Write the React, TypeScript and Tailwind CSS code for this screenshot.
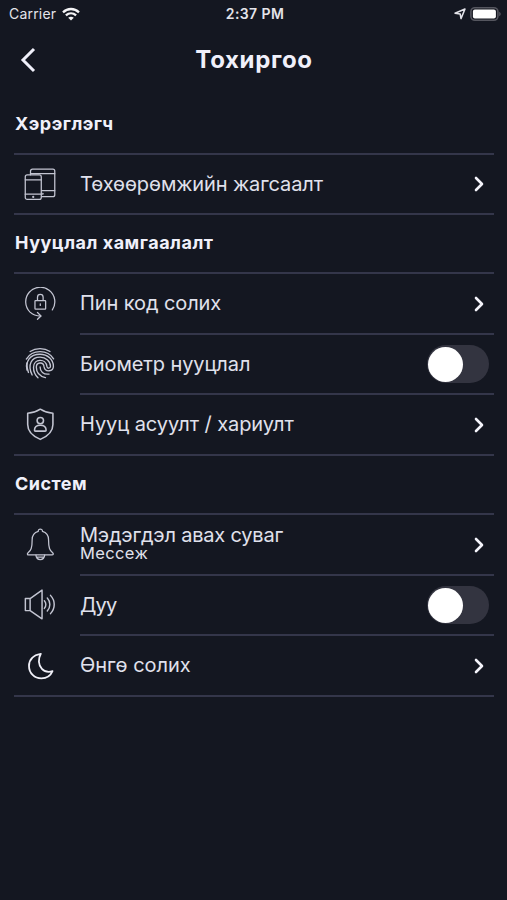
import type { ReactNode } from 'react';

const Icon = ({ children, width = 1.3 }: { children: ReactNode; width?: number }) => (
    <svg
        viewBox="0 0 34 34"
        className="w-[33px] h-[33px] shrink-0"
        fill="none"
        stroke="#c3c5d2"
        strokeWidth={width}
        strokeLinecap="round"
        strokeLinejoin="round"
    >
        {children}
    </svg>
);

const DevicesIcon = () => (
    <Icon>
        <path d="M6.7 7V3.2a2 2 0 0 1 2-2h21a2 2 0 0 1 2 2v24.3a2 2 0 0 1-2 2H18.2" />
        <path d="M6.7 5.8h25M18.2 23.4h13.5" />
        <rect x="1.3" y="7.2" width="16.5" height="25.2" rx="2" />
        <path d="M1.3 12.2h16.5M1.3 27h16.5" />
        <circle cx="9.5" cy="29.8" r=".5" />
        <circle cx="19.3" cy="26.6" r=".4" />
    </Icon>
);

const PinIcon = () => (
    <Icon>
        <path d="M29.2 23.6A15 15 0 1 0 6.2 25.9c2.4 2.2 5.7 3.8 11 4" />
        <path d="M13.9 26.3l3.6 3.6-3.6 3.4" />
        <rect x="11.3" y="14" width="11" height="8.8" rx=".6" />
        <path d="M13.9 13.8v-3.3a2.9 2.9 0 0 1 5.8 0v3.3M16.8 17.3v1.7" />
    </Icon>
);

const FingerprintIcon = () => (
    <Icon width={1.4}>
        <path d="M6.3 4.6C12.2.7 20.8.7 26.8 4.6" />
        <path d="M2.4 12.4C8.6 2.3 24.4 2.2 30.5 12.2" />
        <path d="M4.6 26.2C-.1 13.8 7 7.5 16.5 7.5c8 0 13.8 5.7 13.8 12.4 0 5.6-8.6 6.5-9.6.6-.6-5.5-8-5.2-8 .4 0 5.6 3.7 9.3 9.4 10.7" />
        <path d="M8.4 28.8C3.2 18.3 7.7 10.5 16.5 10.5c6.2 0 10.8 4.3 10.8 9.4 0 2.5-3.4 2.6-3.7.2-.9-9-13.8-8.3-13.8.9 0 4.3 1.7 7.8 4.6 10.6" />
        <path d="M16.6 20.5c0 4.7 3.3 8.1 9.2 7.4" />
        <path d="M3.1 23.8c-.7-2.6-.8-5-.2-7.3" />
    </Icon>
);

const ShieldIcon = () => (
    <Icon width={1.6}>
        <path d="M16.8 1.2c4 2.6 8.2 4 13 4.3v11.4c0 7.1-5.8 12.3-13 15.4-7.2-3.1-13-8.3-13-15.4V5.5c4.8-.3 9-1.7 13-4.3z" />
        <circle cx="16.8" cy="13" r="3.3" />
        <path d="M10.8 23c0-3.6 2.3-5.2 6-5.2s6 1.6 6 5.2q0 .8-1 .8h-10q-1 0-1-.8z" />
    </Icon>
);

const BellIcon = () => (
    <Icon>
        <path d="M14.7 3.4C14.3.3 19.3.3 19 3.4c4.2 1.2 6.3 4.3 6.3 8.7 0 8.4 1.2 11 4.2 13.4 1.2 1.1.7 2.3-.7 2.3H4.9c-1.5 0-1.9-1.3-.7-2.3 3-2.4 4.2-5 4.2-13.4 0-4.4 2.1-7.5 6.3-8.7z" />
        <path d="M12.3 28c.5 6 8.4 6 9 0M13.2 30h7.2" />
    </Icon>
);

const SoundIcon = () => (
    <Icon width={1.5}>
        <path d="M1.4 10.9h4.9v12.4H1.4zM6.3 10.9L18.6 2.2v29.6L6.3 23.3" />
        <path d="M21 13.1c2 2.2 2 5.7 0 7.9M24 10.3c3.5 3.8 3.5 9.6 0 13.4M27.3 7.6c5.1 5.5 5.1 13.3 0 18.8" />
    </Icon>
);

const MoonIcon = () => (
    <svg viewBox="0 0 34 34" className="w-[34px] h-[34px] shrink-0" fill="none" stroke="#f0f0f8" strokeWidth="1.8" strokeLinejoin="round">
        <path d="M16.8 4.8C8.9 6 5 11 5 17c0 7.3 5.6 12.4 12.4 12.4 4.9 0 9.2-2.7 11.1-7.2-3.9 1.2-8 .4-10.6-2.4-3.7-3.8-3.9-9.9-1.1-15z" />
    </svg>
);

const Chevron = () => (
    <svg viewBox="0 0 10 16" className="w-[10px] h-4 mr-[10px]" fill="none" stroke="#f4f4fb" strokeWidth="2.6" strokeLinecap="round" strokeLinejoin="round">
        <path d="M2 2l6 6-6 6" />
    </svg>
);

const Toggle = () => (
    <div className="w-[62px] h-[38px] rounded-full bg-[#333440] pl-px mr-[5px] flex items-center">
        <div className="w-[35px] h-[35px] rounded-full bg-white" />
    </div>
);

type Item = {
    icon: ReactNode;
    label: string;
    style: string;
    height: string;
    note?: string;
    toggle?: boolean;
};

const sections: { title: string; titleStyle: string; items: Item[] }[] = [
    {
        title: 'Хэрэглэгч',
        titleStyle: 'h-[61px] pt-px tracking-[0.5px]',
        items: [{ icon: <DevicesIcon />, label: 'Төхөөрөмжийн жагсаалт', style: 'tracking-[-0.1px]', height: 'h-[60px]' }],
    },
    {
        title: 'Нууцлал хамгаалалт',
        titleStyle: 'h-[57px] pb-[3px] tracking-[0.52px]',
        items: [
            { icon: <PinIcon />, label: 'Пин код солих', style: 'tracking-[-0.1px]', height: 'h-[61px]' },
            { icon: <FingerprintIcon />, label: 'Биометр нууцлал', style: 'tracking-[-0.1px]', height: 'h-[60px]', toggle: true },
            { icon: <ShieldIcon />, label: 'Нууц асуулт / хариулт', style: 'tracking-[-0.07px]', height: 'h-[61px]' },
        ],
    },
    {
        title: 'Систем',
        titleStyle: 'h-[57px] pb-[3px] tracking-[0.5px]',
        items: [
            { icon: <BellIcon />, label: 'Мэдэгдэл авах суваг', style: 'tracking-[-0.2px]', height: 'h-[61px]', note: 'Мессеж' },
            { icon: <SoundIcon />, label: 'Дуу', style: 'tracking-[-0.8px]', height: 'h-[60px]', toggle: true },
            { icon: <MoonIcon />, label: 'Өнгө солих', style: 'tracking-[0px]', height: 'h-[61px]' },
        ],
    },
];

const StatusBar = () => (
    <div className="grid grid-cols-3 items-center h-[27px] pl-[9px] pr-[6px] text-[14px] text-[#e4e4ea]">
        <div className="flex items-center gap-[6px]">
            <span className="tracking-[0.2px]">Carrier</span>
            <svg viewBox="0 0 18 14" className="w-[18px] h-[14px]" fill="none" stroke="#f4f4f6" strokeWidth="2.3">
                <path d="M1 5.3c4.6-4.4 11.4-4.4 16 0M3.9 8.4c3-2.8 7.2-2.8 10.2 0" />
                <path d="M6.2 10.7c1.7-1.4 3.9-1.4 5.6 0L9 13.5z" fill="#f4f4f6" stroke="none" />
            </svg>
        </div>
        <span className="text-center font-semibold tracking-[0.4px]">2:37 PM</span>
        <div className="flex items-center justify-end gap-[4px]">
            <svg viewBox="0 0 12 12" className="w-3 h-3" fill="none" stroke="#e4e4ea" strokeWidth="1.5" strokeLinejoin="round">
                <path d="M11 1L7 10.6 6.2 6 1 5.2z" />
            </svg>
            <svg viewBox="0 0 31 16" className="w-[31px] h-4">
                <rect x=".9" y="1.7" width="27" height="12.6" rx="4" fill="#14161f" stroke="#55565f" strokeWidth="1.6" />
                <rect x="2.9" y="3.6" width="23" height="8.8" rx="2" fill="#fff" />
                <path d="M29.2 5.8c2 .8 2 3.6 0 4.4z" fill="#55565f" />
            </svg>
        </div>
    </div>
);

const Row = ({ item, last }: { item: Item; last: boolean }) => (
    <div className={`flex items-stretch ${item.height} ${last ? 'border-b-2 border-[#34364a]' : ''}`}>
        <div className={`w-[66px] pl-[10px] flex items-center shrink-0 ${last ? '' : 'pb-[3px]'}`}>{item.icon}</div>
        <div className={`flex-1 flex items-center justify-between ${last ? '' : 'border-b-2 border-[#34364a]'}`}>
            <div className={`flex flex-col text-[#e0e1ec] ${item.note ? 'pb-[3px]' : 'pb-px'}`}>
                <span className={`text-[20px] leading-5 whitespace-nowrap ${item.style}`}>{item.label}</span>
                {item.note && <span className="text-[16.5px] leading-4 tracking-[0.35px]">{item.note}</span>}
            </div>
            {item.toggle ? <Toggle /> : <Chevron />}
        </div>
    </div>
);

const App = () => {
    return (
        <div className="w-full h-[900px] bg-[#141721] font-['Inter',sans-serif] overflow-hidden">
            <StatusBar />

            <header className="grid grid-cols-[61px_1fr_60px] items-center h-[65px]">
                <svg viewBox="0 0 16 26" className="w-4 h-[26px] ml-5" fill="none" stroke="#f0f0fa" strokeWidth="3">
                    <path d="M14 2L3 13l11 11" />
                </svg>
                <h1 className="text-center text-[24px] leading-6 font-bold text-[#f0f0fa] tracking-[0.65px]">Тохиргоо</h1>
            </header>

            <main className="pl-[14px] pr-[13px]">
                {sections.map((section) => (
                    <section key={section.title}>
                        <h2 className={`flex items-center text-[18px] font-bold text-[#f0f0fa] pl-px ${section.titleStyle}`}>
                            {section.title}
                        </h2>
                        <div className="border-t-2 border-[#34364a]">
                            {section.items.map((item, i) => (
                                <Row key={item.label} item={item} last={i === section.items.length - 1} />
                            ))}
                        </div>
                    </section>
                ))}
            </main>
        </div>
    );
};

export default App;
